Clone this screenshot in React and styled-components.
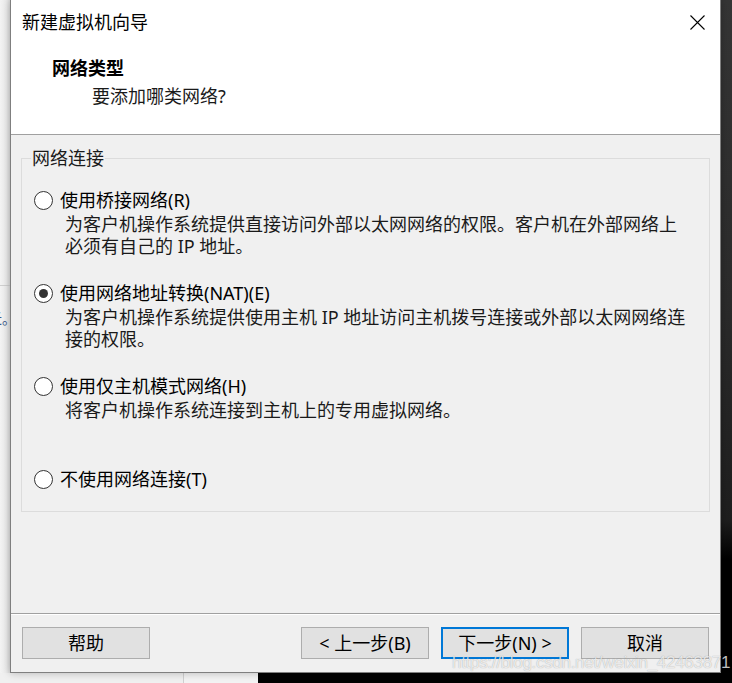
import React from "react";
import styled, { createGlobalStyle } from "styled-components";

const Global = createGlobalStyle`
  html, body { margin: 0; padding: 0; }
  body {
    width: 732px;
    height: 683px;
    overflow: hidden;
    background: #f0f0f0;
    font-family: "Noto Sans", "Noto Sans CJK SC", sans-serif;
  }
  * { box-sizing: border-box; }
`;

const CJK = `"Noto Sans", "Noto Sans CJK SC", sans-serif`;

const Desktop = styled.div`
  position: relative;
  width: 732px;
  height: 683px;
  display: grid;
  grid-template-columns: 10px 711px 11px;
  grid-template-rows: 673px 10px;
  overflow: hidden;
`;

const LeftStrip = styled.div`
  background: linear-gradient(to right, #f3f3f3 0, #ececec 6px, #dcdcdc 10px);
  padding-top: 285px;
  overflow: hidden;
`;

const StripRule = styled.div`
  height: 1px;
  background: #cfcfcf;
`;

const StripText = styled.div`
  margin-top: 24px;
  margin-left: -12px;
  font-family: ${CJK};
  font-size: 14px;
  line-height: 18px;
  color: #3a5a8a;
  white-space: nowrap;
`;

const RightStrip = styled.div`
  background: linear-gradient(to bottom, #353535 0, #2b2b2b 300px, #1e1e1e 520px, #000 560px);
`;

const BottomBand = styled.div`
  grid-column: 1 / 4;
  display: grid;
  grid-template-columns: 183px 1px 74px 1fr;
`;

const BandPiece = styled.div`
  background: ${(p) => p.$bg};
`;

const Dialog = styled.div`
  display: flex;
  flex-direction: column;
  background: #f0f0f0;
  border: 1px solid #7f7f7f;
  border-top: none;
  box-shadow: 0 0 8px rgba(0, 0, 0, 0.25);
  position: relative;
  z-index: 1;
`;

const Header = styled.div`
  height: 135px;
  background: #ffffff;
  border-bottom: 1px solid #a0a0a0;
  display: flex;
  flex-direction: column;
`;

const TitleBar = styled.div`
  height: 44px;
  display: flex;
  align-items: center;
  justify-content: space-between;
  padding: 0 15px 0 11px;
`;

const Title = styled.div`
  font-family: ${CJK};
  font-size: 18px;
  line-height: 24px;
  color: #000;
`;

const CloseIcon = styled.svg`
  width: 15px;
  height: 15px;
  display: block;
`;

const Heading = styled.div`
  margin-top: 12px;
  padding-left: 41px;
  font-family: ${CJK};
  font-weight: 700;
  font-size: 18px;
  line-height: 24px;
  color: #000;
`;

const SubHeading = styled.div`
  margin-top: 4px;
  padding-left: 81px;
  font-family: ${CJK};
  font-size: 18px;
  line-height: 24px;
  color: #1a1a1a;
`;

const Body = styled.div`
  flex: 1;
  padding: 23px 10px 0 10px;
`;

const GroupBox = styled.div`
  position: relative;
  height: 354px;
  border: 1px solid #dcdcdc;
  padding: 29px 0 0 12px;
  display: flex;
  flex-direction: column;
  gap: 24px;
`;

const Legend = styled.div`
  position: absolute;
  top: -13px;
  left: 9px;
  padding: 0 1px;
  background: #f0f0f0;
  font-family: ${CJK};
  font-size: 18px;
  line-height: 24px;
  color: #1a1a1a;
`;

const Option = styled.div`
  display: flex;
  flex-direction: column;
`;

const OptionRow = styled.div`
  height: 24px;
  display: flex;
  align-items: center;
  gap: 7px;
`;

const Radio = styled.span`
  width: 19px;
  height: 19px;
  border-radius: 50%;
  border: 1px solid #333;
  background: #fff;
  display: flex;
  align-items: center;
  justify-content: center;
  flex: none;

  &::after {
    content: "";
    width: 9px;
    height: 9px;
    border-radius: 50%;
    background: ${(p) => (p.$checked ? "#333" : "transparent")};
  }
`;

const OptionLabel = styled.span`
  font-family: ${CJK};
  font-size: 18px;
  line-height: 24px;
  color: #000;
  white-space: nowrap;
`;

const Description = styled.div`
  margin-top: 1px;
  padding-left: 31px;
  font-family: ${CJK};
  font-size: 18px;
  line-height: 22px;
  color: #1a1a1a;
  white-space: pre;
  min-height: ${(p) => (p.$lines || 1) * 22}px;
`;

const Footer = styled.div`
  border-top: 1px solid #a0a0a0;
  box-shadow: inset 0 1px 0 #ffffff;
  padding: 13px 11px 13px 11px;
  display: flex;
  justify-content: space-between;
`;

const ButtonGroup = styled.div`
  display: flex;
  gap: 12px;
`;

const Button = styled.button`
  width: 128px;
  height: 32px;
  margin: 0;
  padding: 0;
  background: #e1e1e1;
  border: ${(p) => (p.$primary ? "2px solid #0078d7" : "1px solid #adadad")};
  font-family: ${CJK};
  font-size: 18px;
  line-height: 24px;
  color: #000;
  display: flex;
  align-items: center;
  justify-content: center;
  white-space: pre;
`;

const Watermark = styled.div`
  position: absolute;
  left: 452px;
  top: 653px;
  z-index: 5;
  font-family: "Liberation Sans", Arial, sans-serif;
  font-size: 17px;
  line-height: 20px;
  color: rgba(255, 255, 255, 0.75);
  text-shadow: 0 0 1px rgba(0, 0, 0, 0.35);
  white-space: nowrap;
  letter-spacing: -0.3px;
`;

const options = [
  {
    label: "使用桥接网络(R)",
    lines: ["为客户机操作系统提供直接访问外部以太网网络的权限。客户机在外部网络上", "必须有自己的 IP 地址。"],
  },
  {
    label: "使用网络地址转换(NAT)(E)",
    checked: true,
    lines: ["为客户机操作系统提供使用主机 IP 地址访问主机拨号连接或外部以太网网络连", "接的权限。"],
  },
  {
    label: "使用仅主机模式网络(H)",
    lines: ["将客户机操作系统连接到主机上的专用虚拟网络。", ""],
  },
  { label: "不使用网络连接(T)", lines: null },
];

export default function App() {
  return (
    <>
      <Global />
      <Desktop>
        <LeftStrip>
          <StripRule />
          <StripText>迁。</StripText>
        </LeftStrip>
        <Dialog>
          <Header>
            <TitleBar>
              <Title>新建虚拟机向导</Title>
              <CloseIcon viewBox="0 0 15 15">
                <path d="M0.5 0.5 L14.5 14.5 M14.5 0.5 L0.5 14.5" stroke="#000" strokeWidth="1.1" fill="none" />
              </CloseIcon>
            </TitleBar>
            <Heading>网络类型</Heading>
            <SubHeading>要添加哪类网络?</SubHeading>
          </Header>
          <Body>
            <GroupBox>
              <Legend>网络连接</Legend>
              {options.map((o) => (
                <Option key={o.label}>
                  <OptionRow>
                    <Radio $checked={o.checked} />
                    <OptionLabel>{o.label}</OptionLabel>
                  </OptionRow>
                  {o.lines && (
                    <Description $lines={o.lines.length}>{o.lines.join("\n")}</Description>
                  )}
                </Option>
              ))}
            </GroupBox>
          </Body>
          <Footer>
            <Button>帮助</Button>
            <ButtonGroup>
              <Button>{"< 上一步(B)"}</Button>
              <Button $primary>{"下一步(N) >"}</Button>
              <Button>取消</Button>
            </ButtonGroup>
          </Footer>
        </Dialog>
        <RightStrip />
        <BottomBand>
          <BandPiece $bg="#f0f0f0" />
          <BandPiece $bg="#d0d0d0" />
          <BandPiece $bg="#f3f3f3" />
          <BandPiece $bg="#000" />
        </BottomBand>
        <Watermark>https://blog.csdn.net/weixin_42463871</Watermark>
      </Desktop>
    </>
  );
}
